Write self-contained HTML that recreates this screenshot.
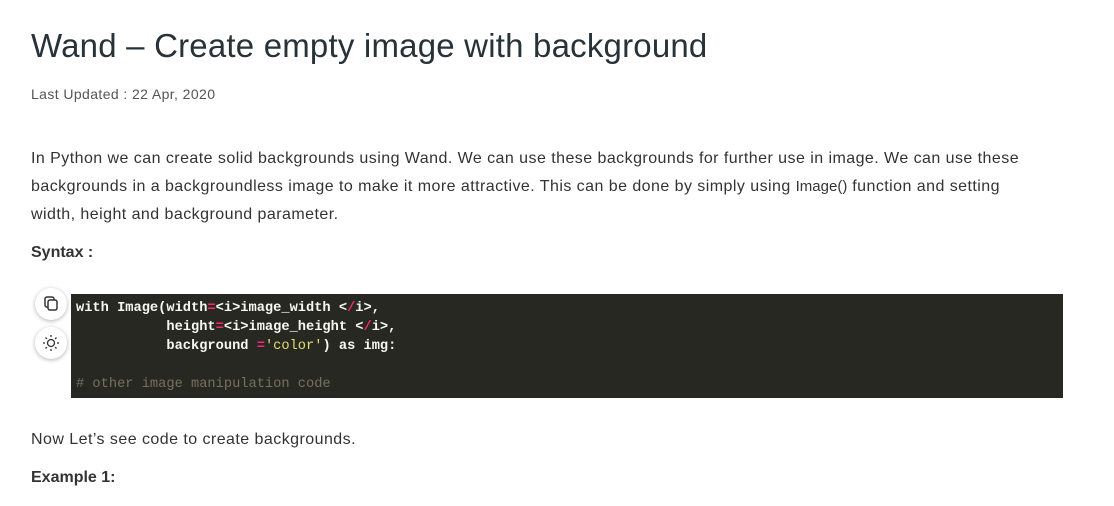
<!DOCTYPE html>
<html><head><meta charset="utf-8"><style>
body{margin:0;background:#fff;width:1114px;height:506px;overflow:hidden;font-family:"Liberation Sans",sans-serif;color:#273239}
h1{position:absolute;left:31px;top:27px;margin:0;font-size:33px;font-weight:500;color:#273239;letter-spacing:0.2px}
.date{position:absolute;left:31px;top:86px;font-size:14px;color:#555;letter-spacing:0.4px}
p{position:absolute;left:31px;margin:0;font-size:16px;line-height:28px;color:#333;width:1000px;letter-spacing:0.45px}
.b{font-weight:bold;font-size:16px;letter-spacing:0}
pre{position:absolute;left:71px;top:294px;width:982px;height:94px;margin:0;padding:5px;background:#272822;color:#f8f8f2;font-family:"Liberation Mono",monospace;font-size:13.7px;line-height:19px;font-weight:bold}
.k{color:#f92672}.s{color:#e6db74;font-weight:normal}.c{color:#75715e;font-weight:normal}
.btn{position:absolute;left:35px;width:32px;height:32px;border-radius:50%;background:#fff;box-shadow:0 1px 4px rgba(0,0,0,.3)}
</style></head><body>
<h1>Wand – Create empty image with background</h1>
<div class="date">Last Updated : 22 Apr, 2020</div>
<p style="top:145px">In Python we can create solid backgrounds using Wand. We can use these backgrounds for further use in image. We can use these backgrounds in a backgroundless image to make it more attractive. This can be done by simply using <span style="font-size:15px;letter-spacing:0">Image()</span> function and setting width, height and background parameter.</p>
<p class="b" style="top:239px">Syntax :</p>
<pre>with Image(width<span class="k">=</span>&lt;i&gt;image_width &lt;<span class="k">/</span>i&gt;,
           height<span class="k">=</span>&lt;i&gt;image_height &lt;<span class="k">/</span>i&gt;,
           background <span class="k">=</span><span class="s">'color'</span>) as img:

<span class="c"># other image manipulation code</span></pre>
<div class="btn" style="top:288px"><svg width="32" height="32"><rect x="10" y="9" width="9" height="10" rx="2" fill="none" stroke="#333" stroke-width="1.5"/><rect x="13" y="12" width="9" height="10" rx="2" fill="#fff" stroke="#333" stroke-width="1.5"/></svg></div>
<div class="btn" style="top:327px"><svg width="32" height="32"><circle cx="16" cy="16" r="3.5" fill="none" stroke="#333" stroke-width="1.3"/><g stroke="#333" stroke-width="1.3"><path d="M16 8v2M16 22v2M8 16h2M22 16h2M10.5 10.5l1.4 1.4M20.1 20.1l1.4 1.4M10.5 21.5l1.4-1.4M20.1 11.9l1.4-1.4"/></g></svg></div>
<p style="top:426px">Now Let’s see code to create backgrounds.</p>
<p class="b" style="top:464px">Example 1:</p>
</body></html>
